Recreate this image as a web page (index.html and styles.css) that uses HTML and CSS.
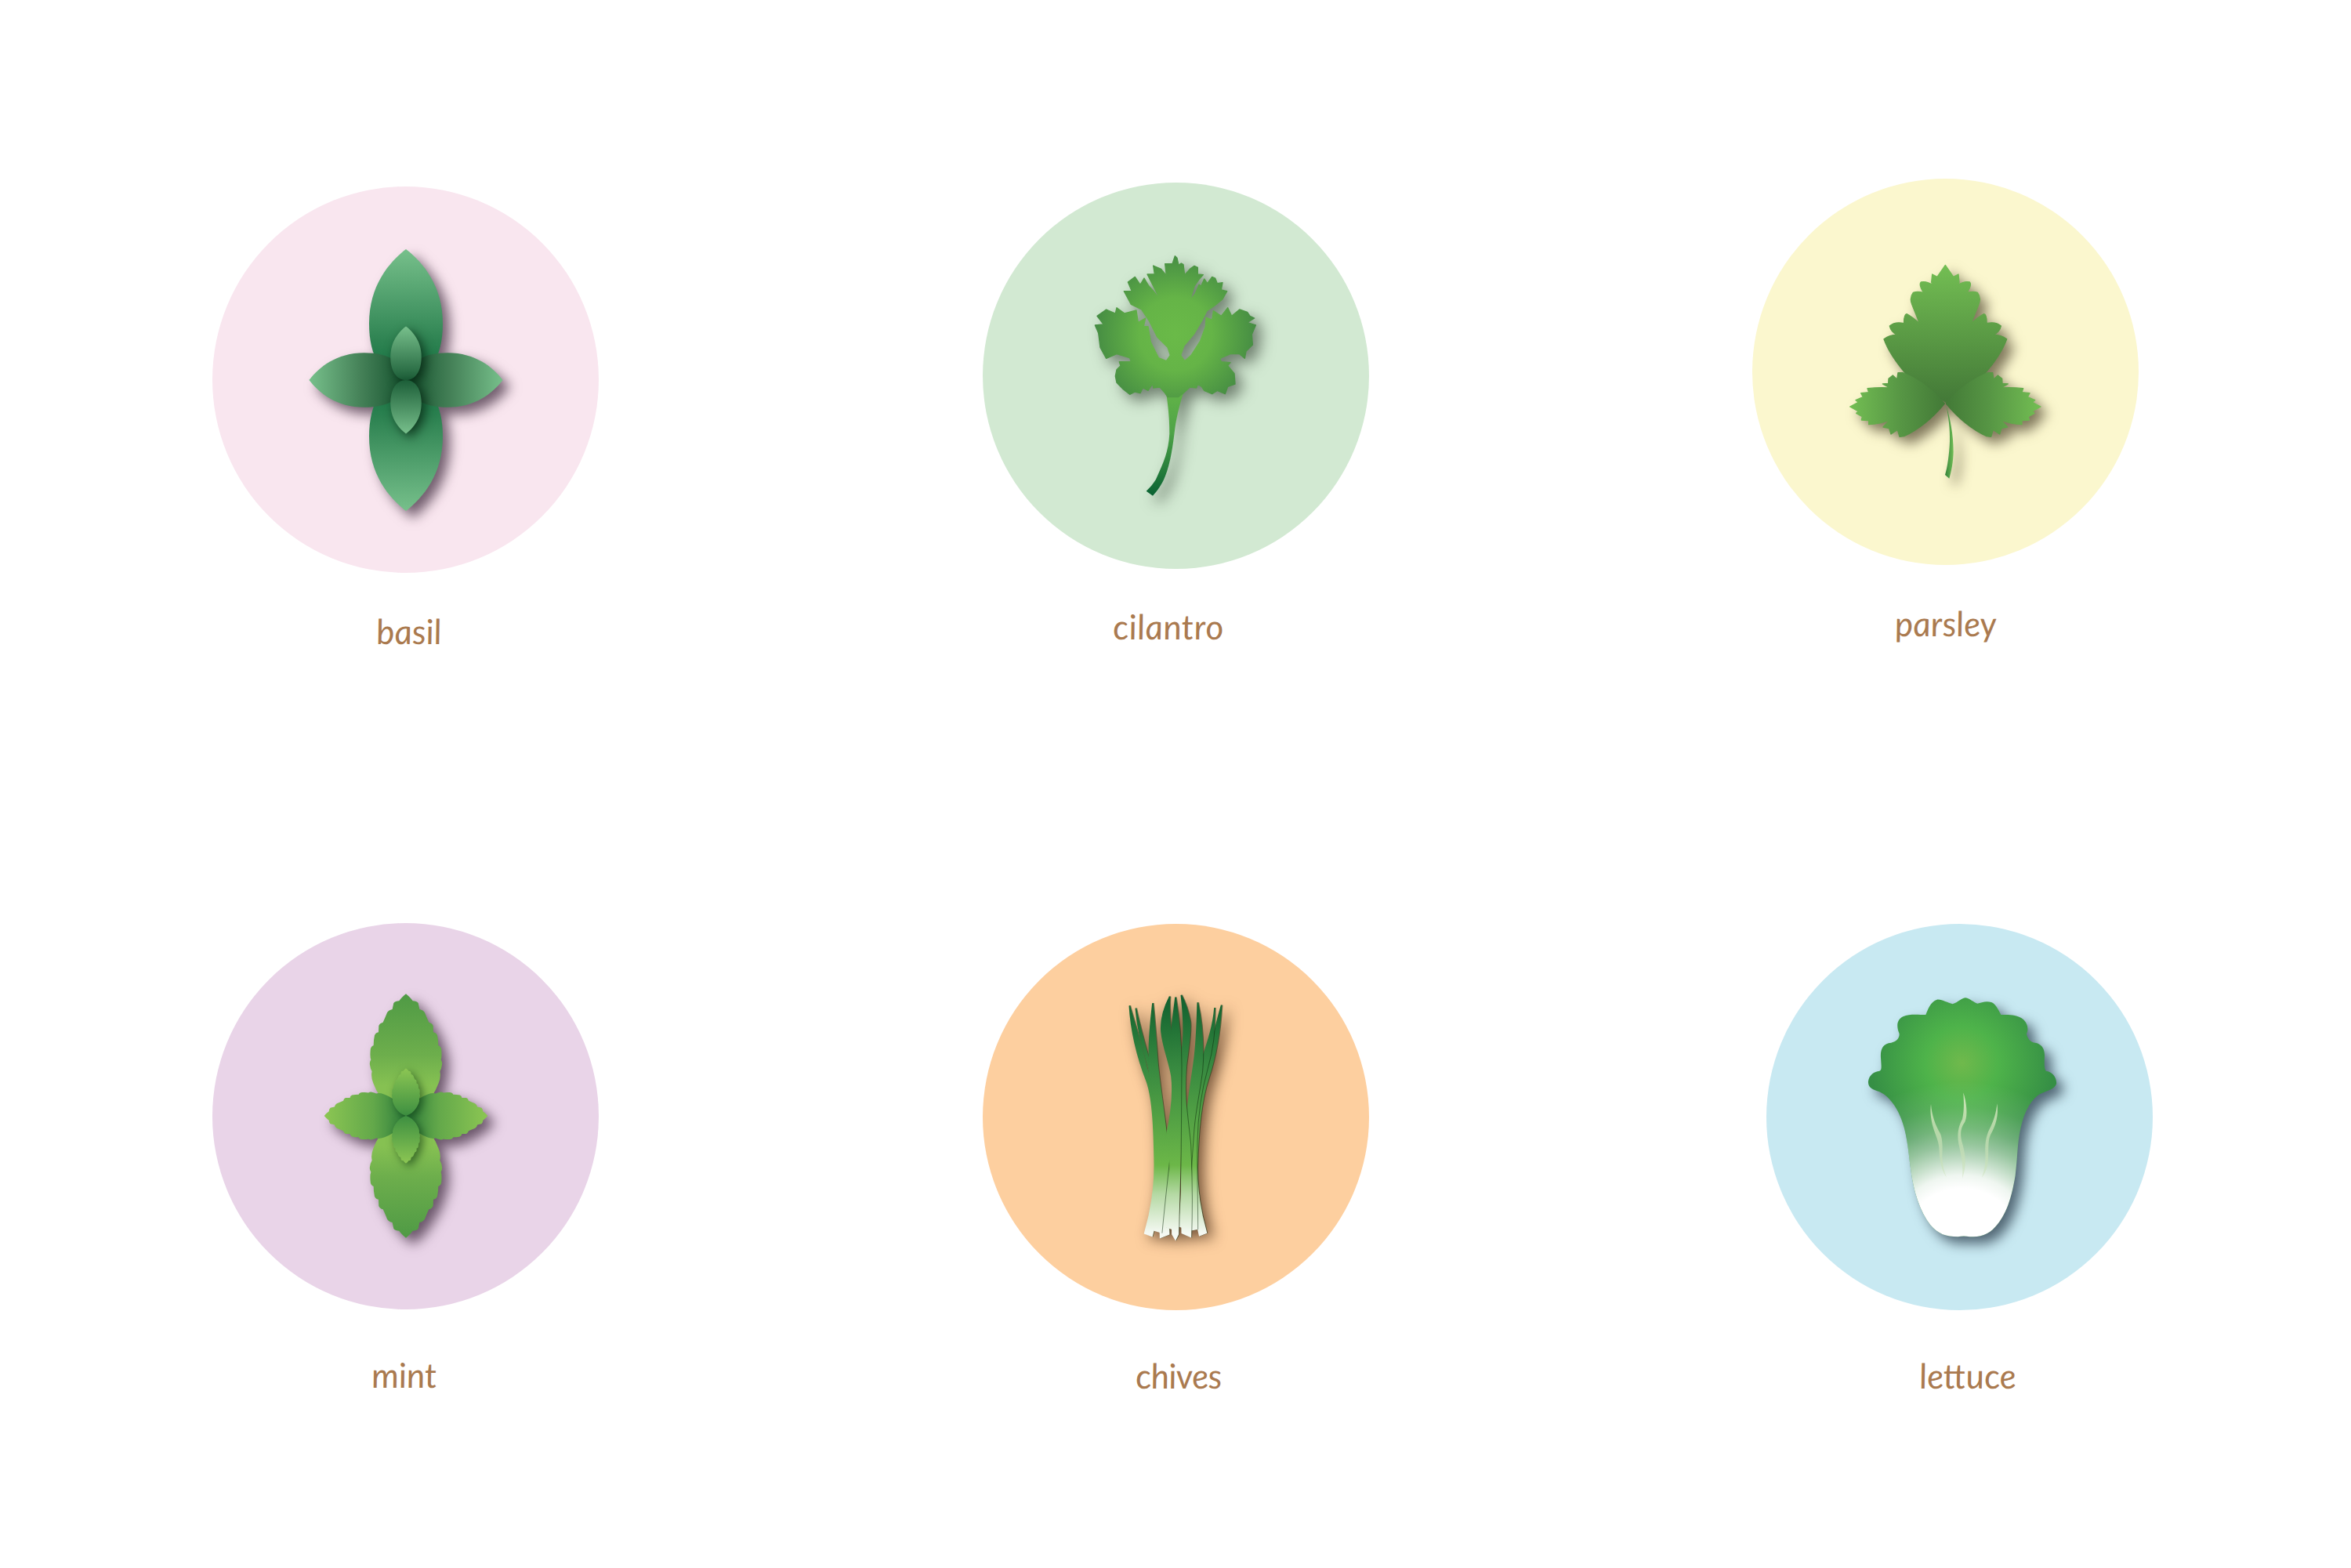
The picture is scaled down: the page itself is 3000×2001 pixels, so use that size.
FILE: index.html
```html
<!DOCTYPE html>
<html lang="en">
<head>
<meta charset="utf-8">
<title>Herbs</title>
<link rel="stylesheet" href="styles.css">
</head>
<body>
<svg class="defs" width="0" height="0" aria-hidden="true">
  <defs>
    <path id="basil-leaf" d="M0 -167 C-22 -150 -47 -120 -47 -72 C-47 -30 -30 0 0 0 C30 0 47 -30 47 -72 C47 -120 22 -150 0 -167Z"/>
    <path id="mint-leaf" d="M0 -467 Q18 -452 26 -440 Q40 -440 47 -432 Q50 -418 52 -408 Q66 -405 72 -395 Q82 -370 88 -358 Q100 -355 104 -345 L105 -320 Q116 -318 120 -308 Q124 -290 124 -270 Q136 -265 136 -250 Q138 -225 134 -215 Q140 -205 138 -195 Q136 -180 130 -170 Q135 -150 125 -125 Q105 -70 60 -30 Q30 -8 0 0 Q-30 -8 -60 -30 Q-105 -70 -125 -125 Q-135 -150 -130 -170 Q-136 -180 -138 -195 Q-140 -205 -134 -215 Q-138 -225 -136 -250 Q-136 -265 -124 -270 Q-124 -290 -120 -308 Q-116 -318 -105 -320 L-104 -345 Q-100 -355 -88 -358 Q-82 -370 -72 -395 Q-66 -405 -52 -408 Q-50 -418 -47 -432 Q-40 -440 -26 -440 Q-18 -452 0 -467Z"/>
    <linearGradient id="basil-v" gradientUnits="userSpaceOnUse" x1="0" y1="-167" x2="0" y2="0">
      <stop offset="0" stop-color="#77c08b"/><stop offset=".7" stop-color="#2e8352"/><stop offset="1" stop-color="#127040"/>
    </linearGradient>
    <linearGradient id="basil-h" gradientUnits="userSpaceOnUse" x1="0" y1="-167" x2="0" y2="0">
      <stop offset="0" stop-color="#77c08b"/><stop offset=".55" stop-color="#437f56"/><stop offset="1" stop-color="#14522e"/>
    </linearGradient>
    <linearGradient id="basil-i" gradientUnits="userSpaceOnUse" x1="0" y1="-167" x2="0" y2="0">
      <stop offset="0" stop-color="#78c08c"/><stop offset="1" stop-color="#1c5e38"/>
    </linearGradient>
    <linearGradient id="mint-v" gradientUnits="userSpaceOnUse" x1="0" y1="-467" x2="0" y2="0">
      <stop offset="0" stop-color="#4f9a45"/><stop offset=".5" stop-color="#6dae4c"/><stop offset=".75" stop-color="#86c152"/><stop offset="1" stop-color="#86c152"/>
    </linearGradient>
    <linearGradient id="mint-h" gradientUnits="userSpaceOnUse" x1="0" y1="-467" x2="0" y2="0">
      <stop offset="0" stop-color="#8cc653"/><stop offset=".6" stop-color="#63a84a"/><stop offset="1" stop-color="#2f7f3d"/>
    </linearGradient>
    <linearGradient id="mint-i" gradientUnits="userSpaceOnUse" x1="0" y1="-467" x2="0" y2="0">
      <stop offset="0" stop-color="#8cc653"/><stop offset="1" stop-color="#3d8f41"/>
    </linearGradient>
    <radialGradient id="cilantro-g" gradientUnits="userSpaceOnUse" cx="330" cy="320" r="310">
      <stop offset="0" stop-color="#6aba48"/><stop offset=".45" stop-color="#65b447"/><stop offset="1" stop-color="#458c43"/>
    </radialGradient>
    <linearGradient id="cilantro-s" gradientUnits="userSpaceOnUse" x1="0" y1="500" x2="0" y2="938">
      <stop offset="0" stop-color="#67b748"/><stop offset=".45" stop-color="#4ea347"/><stop offset="1" stop-color="#0a6233"/>
    </linearGradient>
    <linearGradient id="parsley-v" gradientUnits="userSpaceOnUse" x1="0" y1="25" x2="0" y2="540">
      <stop offset="0" stop-color="#73be53"/><stop offset="1" stop-color="#447a38"/>
    </linearGradient>
    <linearGradient id="parsley-h" gradientUnits="userSpaceOnUse" x1="762" y1="0" x2="400" y2="0">
      <stop offset="0" stop-color="#73be53"/><stop offset=".55" stop-color="#569544"/><stop offset="1" stop-color="#437a37"/>
    </linearGradient>
    <linearGradient id="parsley-s" gradientUnits="userSpaceOnUse" x1="400" y1="0" x2="428" y2="0">
      <stop offset="0" stop-color="#3c8a3e"/><stop offset="1" stop-color="#70bd56"/>
    </linearGradient>
    <linearGradient id="chive" gradientUnits="userSpaceOnUse" x1="0" y1="30" x2="0" y2="960">
      <stop offset="0" stop-color="#0f5f2e"/><stop offset=".3" stop-color="#388a40"/><stop offset=".7" stop-color="#6cb748"/><stop offset=".82" stop-color="#b5d9a4"/><stop offset=".98" stop-color="#f5f9f3"/>
    </linearGradient>
    <radialGradient id="lettuce-g" gradientUnits="userSpaceOnUse" cx="400" cy="290" r="350">
      <stop offset="0" stop-color="#70b94c"/><stop offset=".4" stop-color="#4eb34a"/><stop offset="1" stop-color="#368f45"/>
    </radialGradient>
    <radialGradient id="lettuce-w" gradientUnits="userSpaceOnUse" cx="400" cy="1000" r="640">
      <stop offset=".36" stop-color="#fff"/><stop offset=".44" stop-color="#fff" stop-opacity=".92"/><stop offset=".52" stop-color="#fff" stop-opacity=".72"/><stop offset=".62" stop-color="#fff" stop-opacity=".48"/><stop offset=".72" stop-color="#fff" stop-opacity=".28"/><stop offset=".85" stop-color="#fff" stop-opacity=".1"/><stop offset="1" stop-color="#fff" stop-opacity="0"/>
    </radialGradient>
    <linearGradient id="vein" gradientUnits="userSpaceOnUse" x1="0" y1="403" x2="0" y2="732">
      <stop offset="0" stop-color="#dbeac4" stop-opacity=".9"/><stop offset="1" stop-color="#c6dfb2" stop-opacity=".45"/>
    </linearGradient>
  </defs>
</svg>

<main class="poster">
  <section class="row">
    <figure class="herb herb-basil">
      <div class="disc disc-basil">
        <svg class="icon icon-basil" viewBox="-135 -175 270 350">
          <use href="#basil-leaf" fill="url(#basil-v)"/>
          <use href="#basil-leaf" fill="url(#basil-v)" transform="rotate(180)"/>
          <use href="#basil-leaf" fill="url(#basil-h)" transform="rotate(-90) scale(.74)"/>
          <use href="#basil-leaf" fill="url(#basil-h)" transform="rotate(90) scale(.74)"/>
          <g class="soft-basil"><use href="#basil-leaf" fill="url(#basil-i)" transform="scale(.42 .41)"/></g>
          <g class="soft-basil"><use href="#basil-leaf" fill="url(#basil-i)" transform="rotate(180) scale(.42 .41)"/></g>
        </svg>
      </div>
      <figcaption class="label label-basil">basil</figcaption>
    </figure>

    <figure class="herb herb-cilantro">
      <div class="disc disc-cilantro">
        <svg class="icon icon-cilantro" viewBox="0 0 690 960">
          <path fill="url(#cilantro-s)" d="M290 520 C298 560 308 640 307 700 C303 770 285 810 255 875 C245 892 232 906 218 920 L243 938 C260 920 278 895 290 865 C312 810 320 745 328 680 C335 630 350 570 370 515Z"/>
          <path class="leafy" fill="url(#cilantro-g)" stroke="url(#cilantro-g)" d="M328 20 L336 28 L342 55 L352 48 L360 53 L365 93 L385 70 L402 58 L415 64 L415 90 L436 92 L420 110 L402 135 L386 190 L405 165 L420 130 L428 135 L440 108 L452 125 L470 100 L482 105 L490 125 L510 122 L505 150 L527 155 L510 185 L480 210 L450 230 L430 270 L400 320 L362 365 L350 400 L365 422 L390 400 L425 345 L445 290 L447 255 L470 265 L475 230 L505 250 L530 218 L545 250 L575 225 L605 235 L615 250 L632 258 L605 275 L637 285 L622 320 L625 360 L600 385 L595 412 L575 395 L540 395 L500 412 L505 425 L540 428 L530 440 L555 470 L558 510 L530 520 L520 548 L490 535 L470 548 L440 535 L430 520 L415 510 L410 525 L385 522 L360 545 L340 560 L300 560 L290 545 L270 522 L245 525 L243 508 L225 535 L205 525 L195 545 L175 540 L155 550 L130 530 L105 505 L100 480 L105 455 L120 440 L115 425 L160 425 L155 410 L105 395 L65 412 L42 370 L35 315 L22 285 L55 282 L30 250 L65 225 L100 240 L105 218 L135 240 L180 228 L187 275 L215 258 L208 290 L225 290 L235 350 L265 410 L295 422 L310 400 L300 370 L260 330 L230 270 L200 225 L160 205 L133 155 L163 155 L148 120 L175 100 L195 130 L210 105 L228 135 L242 150 L274 192 L240 125 L222 90 L250 90 L245 57 L275 70 L295 95 L290 50 L318 50Z"/>
        </svg>
      </div>
      <figcaption class="label label-cilantro">cilantro</figcaption>
    </figure>

    <figure class="herb herb-parsley">
      <div class="disc disc-parsley">
        <svg class="icon icon-parsley" viewBox="0 0 810 870">
          <path fill="url(#parsley-s)" d="M400 560 C415 610 428 670 428 740 C427 780 420 815 412 842 L396 828 C405 800 412 750 414 700 C415 650 410 610 400 560Z"/>
          <path class="leafy" fill="url(#parsley-v)" stroke="url(#parsley-v)" d="M397 25 L428 70 L447 60 L450 90 L447 100 Q470 85 490 90 Q500 100 480 130 Q505 125 520 130 Q535 150 525 175 L495 250 Q520 225 545 212 Q556 215 555 248 Q590 240 610 258 Q605 280 582 292 Q610 292 632 308 Q610 370 540 450 L400 550 L254 450 Q184 370 162 308 Q184 292 212 292 Q189 280 184 258 Q204 240 239 248 Q238 215 249 212 Q274 225 299 250 L269 175 Q259 150 274 130 Q289 125 314 130 Q294 100 304 90 Q324 85 347 100 L344 90 L347 60 L366 70Z"/>
          <g id="parsley-side">
            <path class="leafy" fill="url(#parsley-h)" stroke="url(#parsley-h)" d="M400 555 L418 535 Q480 470 560 437 L578 437 L582 462 L598 447 L614 460 L615 478 L637 480 L610 495 Q650 492 695 497 L690 512 L720 515 L712 530 L740 542 L730 550 L762 567 L730 585 L738 592 L715 605 L718 618 L690 620 L690 635 Q650 635 610 618 L635 645 L612 650 L605 672 L580 655 L572 682 L555 680 Q470 640 400 555Z"/>
          </g>
          <use href="#parsley-side" transform="translate(794 0) scale(-1 1)"/>
        </svg>
      </div>
      <figcaption class="label label-parsley">parsley</figcaption>
    </figure>
  </section>

  <section class="row">
    <figure class="herb herb-mint">
      <div class="disc disc-mint">
        <svg class="icon icon-mint" viewBox="-360 -480 720 960">
          <use href="#mint-leaf" fill="url(#mint-v)"/>
          <use href="#mint-leaf" fill="url(#mint-v)" transform="rotate(180)"/>
          <use href="#mint-leaf" fill="url(#mint-h)" transform="rotate(-90) scale(.66 .67)"/>
          <use href="#mint-leaf" fill="url(#mint-h)" transform="rotate(90) scale(.66 .67)"/>
          <g class="soft-mint"><use href="#mint-leaf" fill="url(#mint-i)" transform="scale(.39)"/></g>
          <g class="soft-mint"><use href="#mint-leaf" fill="url(#mint-i)" transform="rotate(180) scale(.39)"/></g>
        </svg>
      </div>
      <figcaption class="label label-mint">mint</figcaption>
    </figure>

    <figure class="herb herb-chives">
      <div class="disc disc-chives">
        <svg class="icon icon-chives" viewBox="0 0 480 1020">
          <path class="blade" fill="url(#chive)" stroke="url(#chive)" d="M416 68 C395 140 380 220 355 280 C325 345 300 440 296 560 C292 690 305 840 332 950 L358 940 C335 860 322 780 322 690 C325 560 335 440 365 350 C395 260 410 170 416 68Z"/>
          <path class="blade" fill="url(#chive)" stroke="url(#chive)" d="M390 78 C385 150 360 220 340 280 C310 360 290 470 288 600 C285 720 290 830 295 930 L322 925 C322 820 318 700 320 590 C322 480 340 380 360 310 C380 240 390 160 390 78Z"/>
          <path class="blade" fill="url(#chive)" stroke="url(#chive)" d="M64 70 C70 170 95 270 130 360 C155 430 158 560 160 680 C160 780 140 880 122 942 L150 952 C175 860 195 780 190 650 C185 520 160 400 130 310 C112 225 85 150 64 70Z"/>
          <path class="blade" fill="url(#chive)" stroke="url(#chive)" d="M88 80 C95 170 115 230 135 300 C150 360 155 470 165 570 C175 680 178 820 182 958 L215 945 C210 820 205 700 195 560 C190 470 175 380 150 320 C130 250 105 160 88 80Z"/>
          <path class="blade" fill="url(#chive)" stroke="url(#chive)" d="M153 60 C145 130 135 210 140 290 C148 370 165 470 180 600 C190 700 195 820 198 915 L228 925 C225 800 215 680 205 570 C195 470 175 350 170 280 C165 200 160 130 153 60Z"/>
          <path class="blade" fill="url(#chive)" stroke="url(#chive)" d="M325 58 C322 130 322 210 310 290 C295 400 285 440 280 540 C272 650 262 800 255 915 L285 925 C290 800 300 650 308 540 C315 460 330 400 340 320 C348 230 340 130 325 58Z"/>
          <path class="blade" fill="url(#chive)" stroke="url(#chive)" d="M262 30 C270 100 275 180 265 240 C258 300 258 430 262 510 C265 640 262 800 265 940 L298 955 C302 820 300 700 295 600 C285 500 270 430 280 300 C290 220 300 170 295 130 C288 90 275 55 262 30Z"/>
          <path class="blade" fill="url(#chive)" stroke="url(#chive)" d="M218 35 C195 80 182 120 186 170 C192 230 215 280 225 340 C232 400 225 480 205 570 C190 650 172 770 158 930 L185 938 C200 780 215 660 225 560 C235 470 240 400 238 330 C236 260 225 220 220 160 C217 120 215 80 218 35Z"/>
          <path class="blade" fill="url(#chive)" stroke="url(#chive)" d="M240 38 C235 90 222 160 222 220 C222 280 232 340 232 400 C232 470 218 530 218 610 C218 720 226 830 228 945 L240 965 L250 945 C252 830 258 700 258 600 C258 500 260 400 260 300 C260 200 250 100 240 38Z"/>
        </svg>
      </div>
      <figcaption class="label label-chives">chives</figcaption>
    </figure>

    <figure class="herb herb-lettuce">
      <div class="disc disc-lettuce">
        <svg class="icon icon-lettuce" viewBox="0 0 810 990">
          <path fill="url(#lettuce-g)" d="M415 40 C430 42 445 58 460 62 C475 58 495 50 515 58 C530 65 540 85 550 105 C575 105 610 102 635 122 C655 140 655 165 648 178 C650 190 660 212 680 212 C705 215 718 235 717 262 C716 290 715 310 722 320 C745 322 765 345 762 370 C755 390 730 395 700 408 C670 425 640 470 625 540 C612 600 615 640 605 720 C590 810 570 870 530 915 C500 950 470 955 430 955 C415 952 400 952 385 955 C340 955 310 945 280 910 C240 860 215 780 205 700 C198 650 195 600 180 540 C165 480 130 420 85 400 C60 392 40 385 42 360 C45 335 65 322 85 320 C95 318 92 300 90 270 C88 240 95 215 130 212 C150 210 165 190 160 175 C150 150 150 125 175 112 C200 100 235 105 262 105 C270 85 280 55 305 47 C325 45 345 60 365 64 C385 58 400 40 415 40Z"/>
          <path fill="url(#lettuce-w)" d="M415 40 C430 42 445 58 460 62 C475 58 495 50 515 58 C530 65 540 85 550 105 C575 105 610 102 635 122 C655 140 655 165 648 178 C650 190 660 212 680 212 C705 215 718 235 717 262 C716 290 715 310 722 320 C745 322 765 345 762 370 C755 390 730 395 700 408 C670 425 640 470 625 540 C612 600 615 640 605 720 C590 810 570 870 530 915 C500 950 470 955 430 955 C415 952 400 952 385 955 C340 955 310 945 280 910 C240 860 215 780 205 700 C198 650 195 600 180 540 C165 480 130 420 85 400 C60 392 40 385 42 360 C45 335 65 322 85 320 C95 318 92 300 90 270 C88 240 95 215 130 212 C150 210 165 190 160 175 C150 150 150 125 175 112 C200 100 235 105 262 105 C270 85 280 55 305 47 C325 45 345 60 365 64 C385 58 400 40 415 40Z"/>
          <path fill="url(#vein)" d="M406 403 C418 440 424 490 412 515 C398 535 392 555 400 590 C415 640 420 680 402 732 C406 690 400 650 388 600 C380 550 392 525 402 505 C410 470 408 440 406 403Z"/>
          <path fill="url(#vein)" d="M282 447 C285 490 300 530 318 560 C328 585 326 620 325 650 C326 680 332 705 342 728 C325 705 316 670 314 630 C314 590 300 570 290 535 C282 505 278 475 282 447Z"/>
          <path fill="url(#vein)" d="M535 445 C542 490 530 530 510 565 C498 590 504 630 500 670 C497 695 487 715 476 730 C488 700 492 670 490 630 C488 590 496 560 510 535 C522 510 532 480 535 445Z"/>
        </svg>
      </div>
      <figcaption class="label label-lettuce">lettuce</figcaption>
    </figure>
  </section>
</main>
</body>
</html>
```
FILE: styles.css
```css
html, body {
  margin: 0;
  padding: 0;
  background: #fff;
}

.defs {
  display: block;
  height: 0;
}

.poster {
  width: 3000px;
  height: 2001px;
  box-sizing: border-box;
  padding: 228px 0 0 271px;
  display: grid;
  grid-template-rows: 950px auto;
  overflow: hidden;
}

.row {
  display: flex;
  align-items: flex-start;
}

.herb {
  margin: 0;
  width: 493px;
  flex: none;
}

.herb-basil { margin-top: 10px; }
.herb-cilantro { margin: 5px 0 0 490px; }
.herb-parsley { margin-left: 489px; }
.herb-chives { margin: 1px 0 0 490px; }
.herb-lettuce { margin: 1px 0 0 507px; }

.disc {
  width: 493px;
  height: 493px;
  border-radius: 50%;
  display: flex;
  align-items: flex-start;
}

.disc-basil { background: #f9e6ef; }
.disc-cilantro { background: #d2e9d2; }
.disc-parsley { background: #fbf7ce; }
.disc-mint { background: #e9d4e8; }
.disc-chives { background: #fdcf9f; }
.disc-lettuce { background: #c8e9f2; }

.icon {
  display: block;
  flex: none;
  overflow: visible;
}

.icon-basil {
  width: 270px;
  height: 350px;
  margin: 71.5px 0 0 111.5px;
  filter: drop-shadow(9px 9px 8px rgba(30, 10, 30, .62));
}

.icon-cilantro {
  width: 230px;
  height: 320px;
  margin: 86.5px 0 0 136px;
  filter: drop-shadow(9px 9px 9px rgba(20, 30, 20, .5));
}

.icon-parsley {
  width: 270px;
  height: 290px;
  margin: 102px 0 0 114px;
  filter: drop-shadow(9px 9px 8px rgba(40, 30, 10, .58));
}

.icon-mint {
  width: 240px;
  height: 320px;
  margin: 86px 0 0 126.5px;
  filter: drop-shadow(9px 9px 8px rgba(30, 10, 30, .62));
}

.icon-chives {
  width: 160px;
  height: 340px;
  margin: 81px 0 0 166px;
  filter: drop-shadow(7px 5px 9px rgba(40, 15, 0, .65));
}

.icon-lettuce {
  width: 270px;
  height: 330px;
  margin: 81px 0 0 116px;
  filter: drop-shadow(9px 9px 8px rgba(10, 25, 40, .62));
}

.soft-basil { filter: drop-shadow(5px 5px 7px rgba(0, 25, 10, .7)); }
.soft-mint { filter: drop-shadow(12px 12px 16px rgba(0, 40, 10, .55)); }
.blade { stroke-width: 5; filter: drop-shadow(3px 0 2px rgba(10, 40, 10, .5)); }
.leafy { stroke-width: 4; stroke-linejoin: round; }

.label {
  width: 493px;
  margin-top: 44px;
  text-align: center;
  font-family: "Lato", sans-serif;
  font-style: italic;
  font-size: 44px;
  line-height: 60px;
  color: #aa7a4f;
  transform: skewX(6deg);
}

.label-basil { margin-left: 4px; }
.label-cilantro { margin-left: -10px; margin-top: 43px; letter-spacing: .4px; }
.label-parsley { margin-top: 44px; }
.label-mint { margin-left: -2px; margin-top: 53px; }
.label-chives { margin-left: 3px; margin-top: 53px; letter-spacing: -.5px; }
.label-lettuce { margin-left: 10px; margin-top: 53px; }
```
